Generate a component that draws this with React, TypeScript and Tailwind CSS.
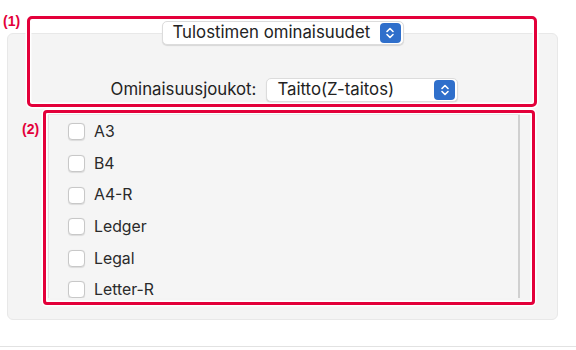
import React from 'react';

const SIZES = ['A3', 'B4', 'A4-R', 'Ledger', 'Legal', 'Letter-R'];

const FONT = { fontFamily: 'Inter, "Noto Sans", "Liberation Sans", sans-serif' };

// sininen nuolinappi ponnahdusvalikon oikeassa reunassa
function Stepper() {
  return (
    <span className="flex h-[20px] w-[21px] items-center justify-center rounded-[4px] bg-[#2f6fcb]">
      <svg width="10" height="14" viewBox="0 0 10 14" fill="none">
        <path d="M2 5.5 L5 2.5 L8 5.5" stroke="white" strokeWidth="1.6" strokeLinecap="round" strokeLinejoin="round" />
        <path d="M2 8.5 L5 11.5 L8 8.5" stroke="white" strokeWidth="1.6" strokeLinecap="round" strokeLinejoin="round" />
      </svg>
    </span>
  );
}

function Popup({ label, width }: { label: string; width: string }) {
  return (
    <div
      className={`flex h-[24px] items-center justify-between rounded-[5px] border border-[#dcdcdc] bg-white pl-[10px] pr-[2px] shadow-[0_1px_1px_rgba(0,0,0,0.12)] ${width}`}
    >
      <span className="text-[16.8px] text-[#222]">{label}</span>
      <Stepper />
    </div>
  );
}

export default function App() {
  return (
    <div className="relative h-[350px] w-[576px] overflow-hidden bg-white" style={FONT}>
      {/* Asetuspaneeli */}
      <div className="pt-[33px] pl-[7px]">
        <div className="h-[287px] w-[551px] rounded-[6px] border border-[#e8e8e8] bg-[#f4f4f4]">
          <div className="-mt-[13px] flex justify-center">
            <Popup label="Tulostimen ominaisuudet" width="w-[242px]" />
          </div>

          <div className="mt-[32px] flex items-center justify-center gap-[10px] pl-[4px]">
            <span className="text-[16.8px] text-[#222]">Ominaisuusjoukot:</span>
            <Popup label="Taitto(Z-taitos)" width="w-[192px]" />
          </div>

          {/* Paperikokolista */}
          <div className="ml-[40px] mt-[12px] h-[184px] w-[472px] overflow-hidden border-t border-l border-r-2 border-[#d0d0d0] border-l-[#e2e2e2] bg-[#f5f5f5]">
            <div className="pt-[1px]">
              {SIZES.map((size) => (
                <div key={size} className="flex h-[31.6px] items-center pl-[19px]">
                  <span className="h-[17px] w-[17px] rounded-[4px] border border-[#c8c8c8] bg-white shadow-[0_0.5px_1px_rgba(0,0,0,0.1)]" />
                  <span className="ml-[9px] text-[15.8px] text-[#2a2a2a]">{size}</span>
                </div>
              ))}
            </div>
          </div>
        </div>
      </div>

      <div className="absolute bottom-[3px] left-0 h-px w-full bg-[#e2e2e2]" />

      {/* Merkinnät (1) ja (2) */}
      <div className="absolute left-[27px] top-[16px] h-[91px] w-[510px] rounded-[5px] border-[3px] border-[#e3003a] shadow-[0_0_0_1.5px_white,inset_0_0_0_1.5px_white]" />
      <span className="absolute left-[3px] top-[11px] text-[14px] font-bold text-[#e3003a]" style={{ fontFamily: '"Liberation Sans", Arial, sans-serif' }}>
        (1)
      </span>
      <div className="absolute left-[43px] top-[110px] h-[195px] w-[492px] rounded-[4px] border-[3px] border-[#e3003a] shadow-[0_0_0_1.5px_white,inset_0_0_0_1.5px_white]" />
      <span className="absolute left-[22px] top-[119px] text-[14px] font-bold text-[#e3003a]" style={{ fontFamily: '"Liberation Sans", Arial, sans-serif' }}>
        (2)
      </span>
    </div>
  );
}
